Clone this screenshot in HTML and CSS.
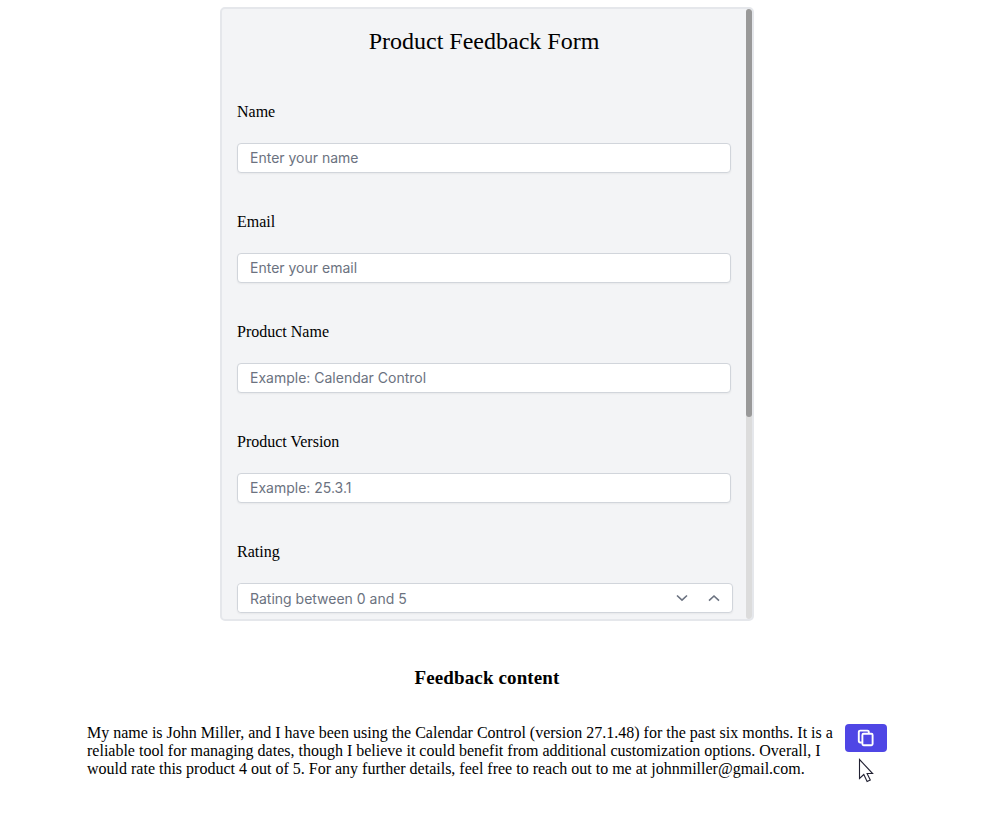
FILE: index.html
```html
<!DOCTYPE html>
<html lang="en">
<head>
  <meta charset="UTF-8">
  <meta name="viewport" content="width=device-width, initial-scale=1.0">
  <title>Product Feedback Form</title>
  <link rel="stylesheet" href="styles.css">
</head>
<body>

  <main class="container">
    <div class="form-box">
      <form class="feedback-form">
        <h1>Product Feedback Form</h1>

        <div class="field">
          <label for="name">Name</label>
          <input type="text" id="name" placeholder="Enter your name">
        </div>
        <div class="field">
          <label for="email">Email</label>
          <input type="text" id="email" placeholder="Enter your email">
        </div>
        <div class="field">
          <label for="product">Product Name</label>
          <input type="text" id="product" placeholder="Example: Calendar Control">
        </div>
        <div class="field">
          <label for="version">Product Version</label>
          <input type="text" id="version" placeholder="Example: 25.3.1">
        </div>
        <div class="field">
          <label for="rating">Rating</label>
          <div class="numeric">
            <input type="text" id="rating" placeholder="Rating between 0 and 5">
            <svg class="spin" viewBox="0 0 12 8"><path d="M1 1.5l5 4.7 5-4.7"/></svg>
            <svg class="spin" viewBox="0 0 12 8"><path d="M1 6.7l5-4.7 5 4.7"/></svg>
          </div>
        </div>
      </form>
      <div class="scrollbar"><div class="thumb"></div></div>
    </div>

    <h3>Feedback content</h3>

    <section class="content">
      <p>
        <span>My name is John Miller, and I have been using the Calendar Control (version 27.1.48) for the past six months. It is a</span>
        <span>reliable tool for managing dates, though I believe it could benefit from additional customization options. Overall, I</span>
        <span>would rate this product 4 out of 5. For any further details, feel free to reach out to me at johnmiller@gmail.com.</span>
      </p>
      <button class="btn-copy" type="button" aria-label="Copy">
        <svg viewBox="0 0 18 18">
          <path d="M4.8 13.5H3.2a1.4 1.4 0 0 1-1.4-1.4V3a1.4 1.4 0 0 1 1.4-1.4h7.2A1.4 1.4 0 0 1 11.8 3v1.4"/>
          <rect x="5.4" y="4.8" width="10.2" height="11.4" rx="1.2"/>
        </svg>
      </button>
    </section>
  </main>

  <svg class="cursor" viewBox="0 0 16 25">
    <path d="M1.5 1.5v19l4.3-4 3.3 7 3.2-1.5-3.2-6.5h5.5z"/>
  </svg>

</body>
</html>
```
FILE: styles.css
```css
body {
  margin: 0;
  background-color: white;
  color: black;
  font-family: "Liberation Serif", "Times New Roman", serif;
  font-size: 16px;
}
.container {
  width: 974px;
  padding-top: 7px;
}
.form-box {
  display: flex;
  box-sizing: border-box;
  width: 534px;
  height: 614px;
  margin: 0 auto;
  border: 2px solid #e5e7eb;
  border-radius: 5px;
  background-color: #f3f4f6;
  overflow: hidden;
}
.feedback-form {
  flex: 1;
  min-width: 0;
  padding: 0 15px;
}
.feedback-form h1 {
  margin: 18px 0 48px;
  font-size: 24px;
  font-weight: normal;
  line-height: 28px;
  text-align: center;
}
.field {
  height: 110px;
}
.field label {
  display: block;
  height: 18px;
  margin-bottom: 22px;
  line-height: 18px;
}
.field input {
  display: block;
  box-sizing: border-box;
  width: 100%;
  height: 30px;
  padding: 0 12px 2px;
  border: 1px solid #d1d5db;
  border-radius: 4px;
  background-color: white;
  box-shadow: 0 1px 2px rgba(0, 0, 0, 0.05);
  font-family: Inter, sans-serif;
  font-size: 14px;
}
.field input::placeholder {
  color: #6b7280;
  opacity: 1;
}
.field .numeric {
  display: flex;
  align-items: center;
  box-sizing: border-box;
  width: 496px;
  height: 30px;
  padding-right: 12px;
  border: 1px solid #d1d5db;
  border-radius: 4px;
  background-color: white;
  box-shadow: 0 1px 2px rgba(0, 0, 0, 0.05);
}
.field .numeric input {
  flex: 1;
  height: 28px;
  padding-bottom: 0;
  border: none;
  box-shadow: none;
}
.spin {
  width: 12px;
  height: 8px;
  fill: none;
  stroke: #6b7280;
  stroke-width: 1.6;
}
.spin + .spin {
  margin-left: 20px;
}
.scrollbar {
  flex: none;
  width: 6px;
  border-radius: 3px;
  background-color: #dcdcdc;
}
.thumb {
  height: 408px;
  border-radius: 3px;
  background-color: #999;
}
.container h3 {
  margin: 46px 0 35px;
  font-size: 19px;
  line-height: 22px;
  letter-spacing: 0.12px;
  text-align: center;
}
.content {
  display: flex;
  width: 800px;
  margin: 0 auto;
}
.content p {
  flex: 1;
  margin: 0;
  line-height: 18px;
}
.content span {
  display: block;
  white-space: nowrap;
}
.btn-copy {
  display: flex;
  align-items: center;
  justify-content: center;
  width: 42px;
  height: 28px;
  padding: 0;
  border: none;
  border-radius: 4px;
  background-color: #4f46e5;
  cursor: pointer;
}
.btn-copy svg {
  width: 18px;
  height: 18px;
  fill: none;
  stroke: white;
  stroke-width: 1.9;
}
.cursor {
  position: absolute;
  left: 858px;
  top: 758px;
  width: 16px;
  height: 25px;
  fill: white;
  stroke: #222233;
  stroke-width: 1.1;
}
```
